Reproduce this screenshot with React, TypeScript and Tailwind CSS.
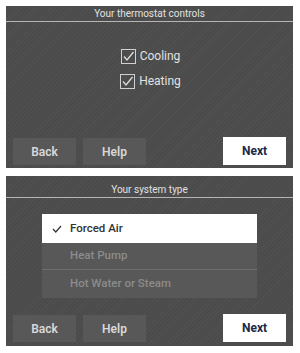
import React from "react";

const hatch =
  "bg-[#4b4b4b] bg-[repeating-linear-gradient(135deg,rgba(255,255,255,0.028)_0px,rgba(255,255,255,0.028)_1px,transparent_1px,transparent_3px)]";

function Btn({ label, primary }: { label: string; primary?: boolean }) {
  if (primary)
    return (
      <div className="w-[63px] h-[28px] bg-white flex items-center justify-center text-[12px] font-bold text-[#1c2a44]">
        {label}
      </div>
    );
  return (
    <div className="w-[63px] h-[27px] bg-[#585858] flex items-center justify-center text-[12px] font-semibold text-[#d8d8d8]">
      {label}
    </div>
  );
}

function Buttons() {
  return (
    <div className="flex items-end px-[7px]">
      <Btn label="Back" />
      <div className="w-[7px]" />
      <Btn label="Help" />
      <div className="flex-1" />
      <Btn label="Next" primary />
    </div>
  );
}

function Check() {
  return (
    <div className="w-[15px] h-[15px] border border-[#d0d0d0] flex items-center justify-center">
      <svg width="13" height="13" viewBox="0 0 13 13">
        <path d="M2 6.5 L5 10 L11.5 2" fill="none" stroke="#dcdcdc" strokeWidth="1.3" />
      </svg>
    </div>
  );
}

export default function App() {
  return (
    <div
      className="w-[300px] h-[353px] bg-white pt-[6px] pl-[6px]"
      style={{ fontFamily: "Roboto, 'Liberation Sans', sans-serif" }}
    >
      <div className={`w-[287px] h-[162px] flex flex-col ${hatch}`}>
        <div className="h-[16px] border-b border-[#b5b5b5] flex items-center justify-center text-[10px] text-[#e0e0e0]">
          Your thermostat controls
        </div>
        <div className="pt-[25px] flex flex-col items-center gap-[7px] pl-[2px]">
          <div className="flex items-center gap-[4px] text-[12px] text-[#e2e2e2]">
            <Check />
            <span>Cooling</span>
          </div>
          <div className="flex items-center gap-[4px] text-[12px] text-[#e2e2e2]">
            <Check />
            <span>Heating</span>
          </div>
        </div>
        <div className="flex-1" />
        <div className="pb-[3px]">
          <Buttons />
        </div>
      </div>

      <div className={`mt-[8px] w-[287px] h-[170px] flex flex-col ${hatch}`}>
        <div className="h-[22px] border-b border-[#b5b5b5] flex items-center justify-center text-[10px] text-[#e0e0e0] pt-[6px]">
          Your system type
        </div>
        <div className="pt-[16px] pl-[36px]">
          <div className="w-[215px] flex flex-col">
            <div className="h-[29px] bg-white flex items-center text-[11.5px] font-medium text-[#333]">
              <span className="w-[28px] flex justify-end pr-[8px]">
                <svg width="10" height="8" viewBox="0 0 10 8">
                  <path d="M1 4 L3.8 7 L9 1" fill="none" stroke="#333" strokeWidth="1.2" />
                </svg>
              </span>
              <span>Forced Air</span>
            </div>
            <div className="h-[27px] bg-[#585858] flex items-center pl-[28px] text-[11.5px] font-medium text-[#8c8c8c] border-b border-[#6e6e6e]">
              Heat Pump
            </div>
            <div className="h-[28px] bg-[#585858] flex items-center pl-[28px] text-[11.5px] font-medium text-[#8c8c8c]">
              Hot Water or Steam
            </div>
          </div>
        </div>
        <div className="flex-1" />
        <div className="pb-[4px]">
          <Buttons />
        </div>
      </div>
    </div>
  );
}
